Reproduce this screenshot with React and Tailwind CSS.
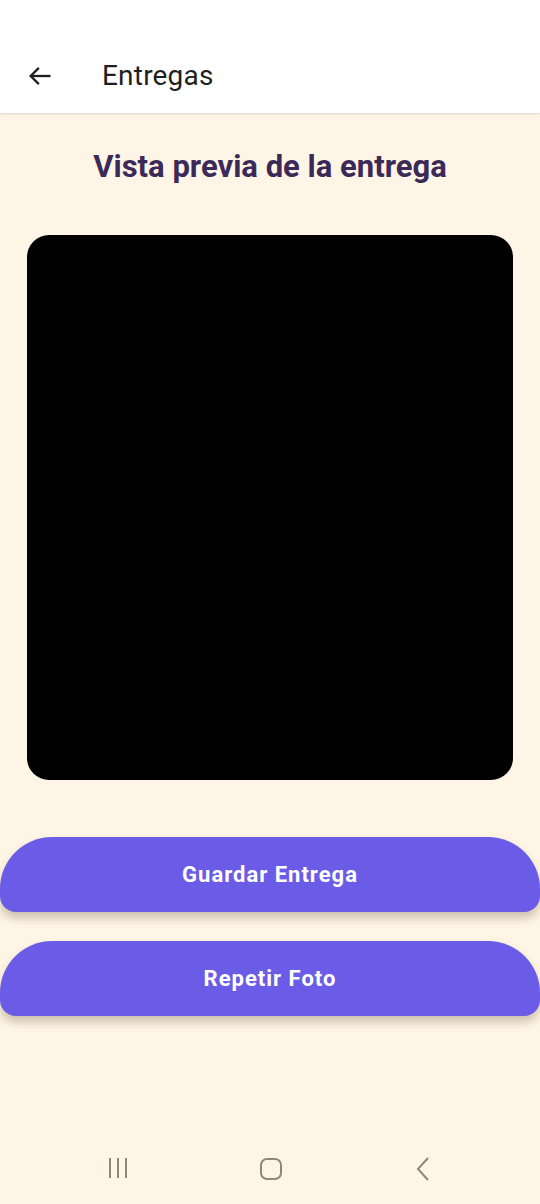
import React from "react";

export default function App() {
  return (
    <div className="w-[540px] h-[1204px] flex flex-col bg-[#fff5e6] font-['Roboto',sans-serif] overflow-hidden">
      {/* Header */}
      <header className="h-[114px] bg-white flex items-end pb-[19px] border-b border-[#e6e0d8] shadow-[0_1px_2px_rgba(0,0,0,0.06)]">
        <div className="flex items-center pl-[26px]">
          <svg width="28" height="28" viewBox="0 0 24 24" fill="none" stroke="#1f1f1f" strokeWidth="2" strokeLinecap="square">
            <path d="M20 12H5" />
            <path d="M11 5l-7 7 7 7" strokeLinecap="butt" />
          </svg>
          <h1 className="ml-[48px] text-[28px] leading-[36px] text-[#1f1f1f] tracking-[0.2px]">Entregas</h1>
        </div>
      </header>

      {/* Content */}
      <main className="flex-1 flex flex-col">
        <h2 className="mt-[34px] text-center text-[31px] font-bold text-[#3b2a58] leading-[38px]">
          Vista previa de la entrega
        </h2>

        <div className="mt-[49px] mx-[27px] h-[545px] rounded-[22px] bg-[#020101]" />

        <div className="mt-[57px] flex flex-col gap-[29px]">
          <ActionButton label="Guardar Entrega" />
          <ActionButton label="Repetir Foto" />
        </div>
      </main>

      {/* System nav */}
      <nav className="h-[64px] flex items-start pt-[16px] justify-center gap-[126px]">
        <svg width="28" height="24" viewBox="0 0 28 24" fill="none" stroke="#8c877f" strokeWidth="2">
          <path d="M6 2v20M14 2v20M22 2v20" />
        </svg>
        <svg width="26" height="26" viewBox="0 0 26 26" fill="none" stroke="#8c877f" strokeWidth="2">
          <rect x="3" y="3" width="20" height="20" rx="6" />
        </svg>
        <svg width="26" height="26" viewBox="0 0 26 26" fill="none" stroke="#8c877f" strokeWidth="2">
          <path d="M18 2L8 13l10 11" />
        </svg>
      </nav>
    </div>
  );
}

function ActionButton({ label }) {
  return (
    <button className="h-[75px] w-full bg-[#6b5ce7] text-white text-[22px] font-bold tracking-[1px] rounded-t-[52px] rounded-b-[16px] shadow-[0_6px_10px_rgba(80,60,30,0.28)]">
      {label}
    </button>
  );
}
